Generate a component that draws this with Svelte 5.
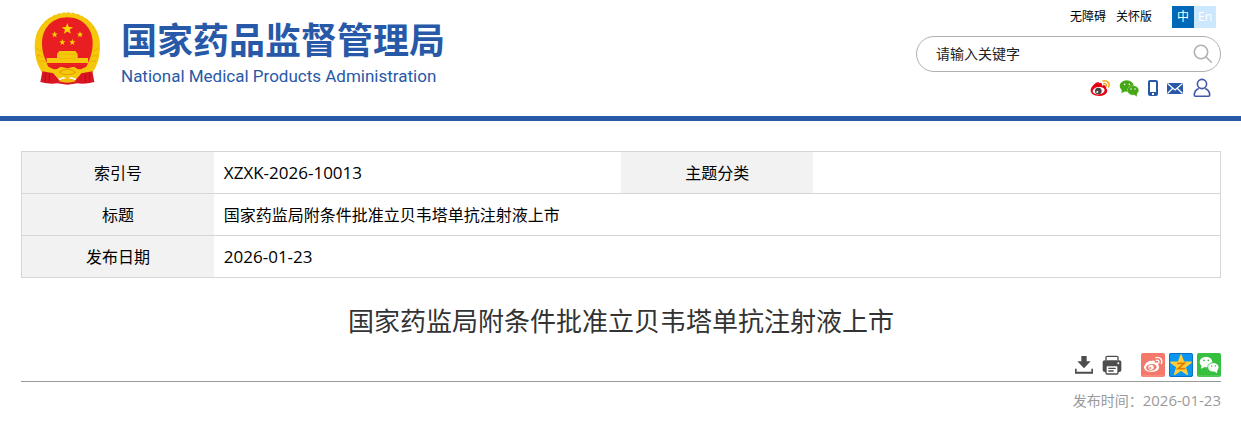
<script>
	let keyword = $state('');
	let lang = $state('zh');

	const title = '国家药监局附条件批准立贝韦塔单抗注射液上市';
	const indexNo = 'XZXK-2026-10013';
	const date = '2026-01-23';

	const star = 'M0 -10 L2.4 -3.2 L9.5 -3.1 L3.8 1.2 L5.9 8.1 L0 4 L-5.9 8.1 L-3.8 1.2 L-9.5 -3.1 L-2.4 -3.2 Z';
	const smallStars = [
		[65, 68],
		[141, 68],
		[88, 91],
		[118, 91]
	];
</script>

<svelte:head>
	<title>{title}</title>
</svelte:head>

<header>
	<a class="logo" href="#home">
		<svg class="emblem" viewBox="0 0 204 222" aria-hidden="true">
			<path d="M103 3 C160 3 201 46 201 101 C201 138 192 164 174 188 H32 C14 164 5 138 5 101 C5 46 46 3 103 3 Z" fill="#f6c80c" />
			<path d="M13 72 A93 93 0 0 1 193 72 M13 130 Q19 156 38 172 M193 130 Q187 156 168 172" fill="none" stroke="#edb908" stroke-width="3" stroke-dasharray="10 5" />
			<path d="M9 108 L25 118 M11 128 L30 134 M17 147 L36 148 M197 108 L181 118 M195 128 L176 134 M189 147 L170 148" stroke="#e9b000" stroke-width="3" />
			<path d="M103 16 C148 16 179 49 179 93 C179 122 171 140 162 158 H44 C35 140 27 122 27 93 C27 49 58 16 103 16 Z" fill="#e81e22" />
			<path d={star} transform="translate(103 51) scale(1.8)" fill="#fcd400" />
			{#each smallStars as [x, y]}
				<path d={star} transform="translate({x} {y})" fill="#fcd400" />
			{/each}
			<path d="M79 117 H127 L134 126 V138 H165 V153 H41 V138 H72 V126 Z" fill="#f6c80c" />
			<path d="M73 127 H133 M78 139 H128" stroke="#e9b000" stroke-width="2" />
			<path d="M42 157 H164 L155 172 H51 Z" fill="#e81e22" />
			<path d="M24 164 Q49 160 66 175 L83 164 L103 169 L123 164 L140 175 Q157 160 182 164 L174 181 L141 186 L132 201 L114 195 L103 201 L92 195 L74 201 L65 186 L32 181 Z" fill="#f6c80c" />
			<path d="M78 181 Q103 162 128 181 Q103 196 78 181 Z" fill="#f6c80c" stroke="#e49a00" stroke-width="3" />
			<path d="M28 178 L61 184 L79 205 L103 200 L127 205 L145 184 L178 178 L184 210 Q158 217 133 214 L103 218 L73 214 Q48 217 22 210 Z" fill="#da1624" />
			<path d="M37 183 L36 211 M49 185 L49 213 M169 183 L170 211 M157 185 L157 213" stroke="#b10f1d" stroke-width="3" />
			<path d="M76 207 Q103 190 130 207 Q103 218 76 207 Z" fill="#f0bb08" />
		</svg>
		<span class="name">
			<strong>国家药品监督管理局</strong>
			<span>National Medical Products Administration</span>
		</span>
	</a>

	<div class="tools">
		<div class="top-links">
			<a href="#accessible">无障碍</a>
			<a href="#care">关怀版</a>
			<div class="lang">
				<button class:active={lang === 'zh'} onclick={() => (lang = 'zh')}>中</button>
				<button class:active={lang === 'en'} onclick={() => (lang = 'en')}>En</button>
			</div>
		</div>

		<form class="search" onsubmit={(e) => e.preventDefault()}>
			<input type="text" aria-label="请输入关键字" placeholder="请输入关键字" bind:value={keyword} />
			<button aria-label="搜索">
				<svg width="20" height="20" viewBox="0 0 20 20" fill="none" stroke="#b0b0b0" stroke-width="1.6">
					<circle cx="8" cy="8" r="6.7" />
					<path d="M12.8 12.8 L18.8 18.8" />
				</svg>
			</button>
		</form>

		<nav class="social">
			<a href="#weibo" aria-label="微博">
				<svg width="20" height="18" viewBox="0 0 60 54">
					<path d="M25 13 C33 8 38 13 36 20 C45 17 51 20 48 28 C56 33 52 51 28 51 C11 51 2 44 2 34 C2 23 19 7 27 9 Z" fill="#e60012" />
					<ellipse cx="26" cy="35" rx="18" ry="11" fill="#fff" transform="rotate(-8 26 35)" />
					<circle cx="25" cy="36" r="10" fill="#444" />
					<circle cx="22" cy="39" r="3" fill="#fff" />
					<path d="M39 6 C51 2 61 13 56 24 M41 14 C47 12 51 17 48 22" fill="none" stroke="#f8a51b" stroke-width="4.5" stroke-linecap="round" />
				</svg>
			</a>
			<a href="#wechat" aria-label="微信">
				<svg width="20" height="18" viewBox="0 0 60 54">
					<path d="M9 30 L7 43 L20 36 Z" fill="#46a716" />
					<ellipse cx="23" cy="21" rx="21" ry="17" fill="#46a716" />
					<ellipse cx="42" cy="34" rx="17" ry="14" fill="#46a716" stroke="#b5dca0" stroke-width="1.5" />
					<path d="M44 45 L53 53 L54 42 Z" fill="#46a716" />
					<g fill="#fff">
						<circle cx="17" cy="16" r="2.5" />
						<circle cx="31" cy="16" r="2.5" />
						<circle cx="36" cy="30" r="2.2" />
						<circle cx="48" cy="30" r="2.2" />
					</g>
				</svg>
			</a>
			<a href="#mobile" aria-label="手机">
				<svg width="10" height="18" viewBox="0 0 10 18">
					<rect width="10" height="16" y="1" rx="2" fill="#2859a8" />
					<rect x="2" y="3" width="6" height="10" fill="#fff" />
					<rect x="4" y="14" width="2" height="2" fill="#fff" />
				</svg>
			</a>
			<a href="#mail" aria-label="邮箱">
				<svg width="16" height="18" viewBox="0 0 16 18">
					<rect y="4" width="16" height="11" fill="#2859a8" />
					<path d="M0.5 4.5 L8 11 L15.5 4.5 M0.5 14.5 L5.8 9.3 M15.5 14.5 L10.2 9.3" fill="none" stroke="#fff" stroke-width="1.2" />
				</svg>
			</a>
			<a href="#user" aria-label="用户">
				<svg width="20" height="20" viewBox="0 0 20 20" fill="none" stroke="#4059a9" stroke-width="1.6">
					<circle cx="10" cy="6" r="4.6" />
					<path d="M6.8 10.5 C4 11.6 2.3 13.6 2.3 17.2 Q2.3 18.2 3.5 18.2 H16.5 Q17.7 18.2 17.7 17.2 C17.7 13.6 16 11.6 13.2 10.5" />
				</svg>
			</a>
		</nav>
	</div>
</header>

<main>
	<table>
		<tbody>
			<tr>
				<th scope="row">索引号</th>
				<td class="latin">{indexNo}</td>
				<th scope="row">主题分类</th>
				<td></td>
			</tr>
			<tr>
				<th scope="row">标题</th>
				<td colspan="3">{title}</td>
			</tr>
			<tr>
				<th scope="row">发布日期</th>
				<td class="latin" colspan="3">{date}</td>
			</tr>
		</tbody>
	</table>

	<h1>{title}</h1>

	<div class="share">
		<button aria-label="下载">
			<svg width="20" height="24" viewBox="0 0 60 72" fill="#4d4d4d">
				<path d="M22 9 H38 V25 H50 L30 46 L10 25 H22 Z" />
				<path d="M3 47 H8 V56 H52 V47 H57 V62 H3 Z" />
			</svg>
		</button>
		<button class="print" aria-label="打印">
			<svg width="20" height="24" viewBox="0 0 60 72">
				<path d="M12 22 V13 Q12 10 16 10 H44 Q48 10 48 13 V22" fill="none" stroke="#4d4d4d" stroke-width="4" />
				<rect x="2" y="22" width="56" height="35" rx="6" fill="#4d4d4d" />
				<circle cx="49" cy="31" r="3" fill="#fff" />
				<rect x="12" y="38" width="36" height="25" rx="3" fill="#fff" stroke="#4d4d4d" stroke-width="4" />
				<path d="M19 46 H41 M19 54 H35" stroke="#4d4d4d" stroke-width="4" />
			</svg>
		</button>
		<a href="#share-weibo" aria-label="分享到微博">
			<svg width="24" height="24" viewBox="0 0 72 72">
				<rect width="72" height="72" rx="6" fill="#f4796a" />
				<path d="M4 69 H68" stroke="#f9aaa0" stroke-width="2" />
				<path d="M31 24 C39 20 43 23 41 29 C50 27 54 29 51 35 C60 42 52 57 31 57 C18 57 9 51 9 43 C9 34 24 19 31 24 Z" fill="#fff" />
				<ellipse cx="31" cy="43" rx="16" ry="10" fill="#f4796a" transform="rotate(-7 31 43)" />
				<circle cx="30" cy="43" r="8" fill="#fff" />
				<circle cx="28" cy="45" r="3" fill="#f4796a" />
				<path d="M45 14 C57 10 66 21 61 32 M46 22 C52 20 56 25 53 30" fill="none" stroke="#fff" stroke-width="4" stroke-linecap="round" />
			</svg>
		</a>
		<a href="#share-qzone" aria-label="分享到QQ空间">
			<svg width="24" height="24" viewBox="0 0 72 72">
				<rect width="72" height="72" rx="6" fill="#0b96f2" />
				<rect x="1.5" y="1.5" width="69" height="69" rx="5" fill="none" stroke="#0672c4" stroke-width="3" />
				<path d={star} transform="translate(36 38) scale(3.2)" fill="#ffce3a" stroke="#ffce3a" stroke-width="1.4" stroke-linejoin="round" />
				<path d="M25 31 H46 L27 47 H49" fill="none" stroke="#dd7d00" stroke-width="5" />
			</svg>
		</a>
		<a href="#share-wechat" aria-label="分享到微信">
			<svg width="24" height="24" viewBox="0 0 72 72">
				<rect width="72" height="72" rx="6" fill="#37bf40" />
				<path d="M4 69 H68" stroke="#87d98c" stroke-width="2" />
				<path d="M14 36 L12 47 L25 41 Z" fill="#fff" />
				<ellipse cx="27" cy="27" rx="19" ry="16" fill="#fff" />
				<ellipse cx="49" cy="43" rx="17" ry="14" fill="#fff" stroke="#37bf40" stroke-width="2.5" />
				<path d="M51 54 L60 61 L61 50 Z" fill="#fff" />
				<g fill="#37bf40">
					<circle cx="21" cy="22" r="2.6" />
					<circle cx="34" cy="22" r="2.6" />
					<circle cx="44" cy="39" r="2.3" />
					<circle cx="55" cy="39" r="2.3" />
				</g>
			</svg>
		</a>
	</div>

	<p class="time">发布时间：<time datetime={date}>{date}</time></p>
</main>

<style>
	:global(body) {
		background: #fff;
		color: #000;
		font-family: 'Open Sans', 'Noto Sans CJK SC', sans-serif;
	}

	a {
		color: inherit;
		text-decoration: none;
	}

	button {
		padding: 0;
		border: 0;
		background: none;
		font: inherit;
		cursor: pointer;
	}

	svg {
		display: block;
	}

	header {
		display: flex;
		justify-content: space-between;
		align-items: flex-start;
		min-height: 98px;
		padding: 6px 20px 12px 33px;
		border-bottom: 5px solid #2859a8;
	}

	.logo {
		display: flex;
		gap: 20px;
		padding-top: 6px;
		color: #2859a8;
	}

	.emblem {
		width: 68px;
		height: 74px;
	}

	.name {
		display: flex;
		flex-direction: column;
		padding-top: 8px;
		font-family: Roboto, 'Noto Sans CJK SC', sans-serif;
		font-size: 17px;
		line-height: 24px;
	}

	.name strong {
		font-size: 36px;
		line-height: 44px;
	}

	.tools {
		display: flex;
		flex-direction: column;
		align-items: flex-end;
		width: 305px;
	}

	.top-links {
		display: flex;
		gap: 10px;
		padding-right: 5px;
		font-size: 12px;
		line-height: 22px;
	}

	.lang {
		display: flex;
		margin-left: 10px;
	}

	.lang button {
		width: 22px;
		height: 22px;
		background: #cce8ff;
		color: #fff;
	}

	.lang .active {
		background: #0068b7;
	}

	.search {
		box-sizing: border-box;
		display: flex;
		align-items: center;
		width: 100%;
		height: 36px;
		margin-top: 8px;
		padding: 0 7px 0 19px;
		border: 1px solid #b0b0b0;
		border-radius: 18px;
	}

	.search input {
		flex: 1;
		min-width: 0;
		padding: 0 0 2px;
		border: 0;
		outline: none;
		background: none;
		font: inherit;
		font-size: 14px;
	}

	.search input::placeholder {
		color: #222;
		opacity: 1;
	}

	.social {
		display: flex;
		align-items: center;
		gap: 9px;
		margin-top: 6px;
		padding-right: 9px;
	}

	main {
		padding: 30px 20px 0 21px;
	}

	table {
		width: 100%;
		border-collapse: collapse;
		table-layout: fixed;
		border: 1px solid #d6d6d6;
		font-size: 16px;
		line-height: 24px;
	}

	tr {
		border-bottom: 1px solid #d6d6d6;
	}

	th {
		width: 16%;
		padding: 0;
		background: #f2f2f2;
		font-weight: normal;
		text-align: center;
	}

	td {
		height: 41px;
		padding: 0 10px;
	}

	.latin {
		font-size: 17px;
	}

	h1 {
		margin: 24px 0 12px;
		color: #333;
		font-size: 26px;
		font-weight: normal;
		line-height: 39px;
		text-align: center;
	}

	.share {
		display: flex;
		justify-content: flex-end;
		gap: 4px;
		padding-bottom: 4px;
		border-bottom: 1px solid #999;
	}

	.share button {
		margin-right: 4px;
	}

	.share .print {
		margin-right: 15px;
	}

	.time {
		margin: 8px 0 0;
		color: #999;
		font-size: 14px;
		line-height: 20px;
		text-align: right;
	}

	.time time {
		font-size: 15px;
	}
</style>
